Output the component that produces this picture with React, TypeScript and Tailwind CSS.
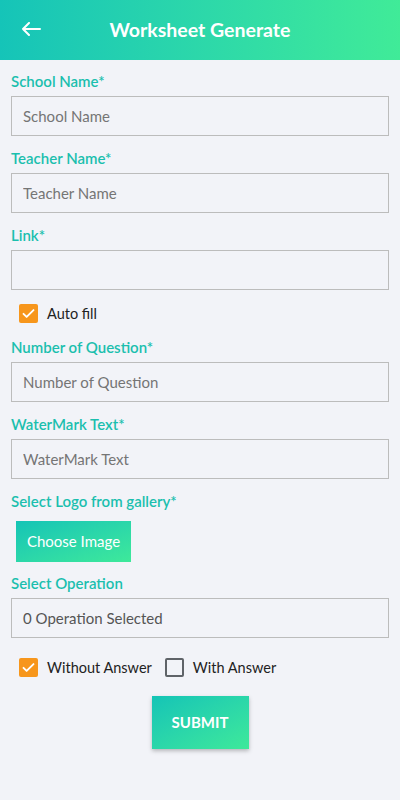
const FONT = { fontFamily: 'Lato, "Noto Sans", sans-serif' };

function Label({ children }: { children: React.ReactNode }) {
  return <p className="text-[15px] font-semibold leading-5 text-[#1bbfae]">{children}</p>;
}

function Field({ label, placeholder }: { label: string; placeholder: string }) {
  return (
    <div className="mb-3">
      <Label>{label}</Label>
      <input
        placeholder={placeholder}
        className="mt-[5px] block h-10 w-full border border-[#bcbcbc] bg-transparent px-[11px] text-[15px] text-[#333] outline-none placeholder:text-[#757575]"
        style={FONT}
      />
    </div>
  );
}

function Check({ checked, label }: { checked: boolean; label: string }) {
  return (
    <label className="flex h-[19px] items-center gap-[9px]">
      {checked ? (
        <span className="flex h-[19px] w-[19px] items-center justify-center rounded-[2px] bg-[#f7961c]">
          <svg viewBox="0 0 24 24" className="h-[15px] w-[15px]" fill="none" stroke="white" strokeWidth="3" strokeLinecap="round" strokeLinejoin="round">
            <path d="M4 12.5l5 5L20 6.5" />
          </svg>
        </span>
      ) : (
        <span className="h-[19px] w-[19px] rounded-[2px] border-2 border-[#5f6368]" />
      )}
      <span className="text-[14.5px] leading-5 text-[#222]">{label}</span>
    </label>
  );
}

export default function App() {
  return (
    <div className="min-h-[800px] w-[400px] bg-[#f2f3f8]" style={FONT}>
      <header className="relative flex h-[60px] items-center justify-center bg-gradient-to-r from-[#15c4b8] to-[#40eb98]">
        <svg viewBox="0 0 20 14" className="absolute left-[21px] top-[22px] h-[14px] w-[20px]" fill="none" stroke="white" strokeWidth="2" strokeLinecap="round" strokeLinejoin="round">
          <path d="M19 7H2M8 1L2 7l6 6" />
        </svg>
        <h1 className="text-[19.5px] font-bold text-white">Worksheet Generate</h1>
      </header>

      <main className="px-[11px] pt-[11px]">
        <Field label="School Name*" placeholder="School Name" />
        <Field label="Teacher Name*" placeholder="Teacher Name" />
        <div>
          <Label>Link*</Label>
          <input className="mt-[5px] block h-10 w-full border border-[#bcbcbc] bg-transparent outline-none" />
        </div>
        <div className="ml-[8px] mt-[14px] mb-[14px]">
          <Check checked label="Auto fill" />
        </div>
        <Field label="Number of Question*" placeholder="Number of Question" />
        <Field label="WaterMark Text*" placeholder="WaterMark Text" />
        <div className="mb-[11px]">
          <Label>Select Logo from gallery*</Label>
          <button className="ml-[5px] mt-[10px] block h-[41px] w-[115px] bg-gradient-to-br from-[#14c4b6] to-[#3ee99a] text-[15px] text-white">
            Choose Image
          </button>
        </div>
        <div>
          <Label>Select Operation</Label>
          <div className="mt-[5px] flex h-10 w-full items-center border border-[#bcbcbc] px-[11px] text-[15px] text-[#555]">
            0 Operation Selected
          </div>
        </div>
        <div className="ml-[8px] mt-[20px] flex items-center gap-[13px]">
          <Check checked label="Without Answer" />
          <Check checked={false} label="With Answer" />
        </div>
        <div className="mt-[19px] flex justify-center">
          <button className="h-[53px] w-[97px] bg-gradient-to-br from-[#14c4b6] to-[#3ee99a] text-[15px] font-bold text-white shadow-[0_2px_4px_rgba(0,0,0,0.25)]">
            SUBMIT
          </button>
        </div>
      </main>
    </div>
  );
}
